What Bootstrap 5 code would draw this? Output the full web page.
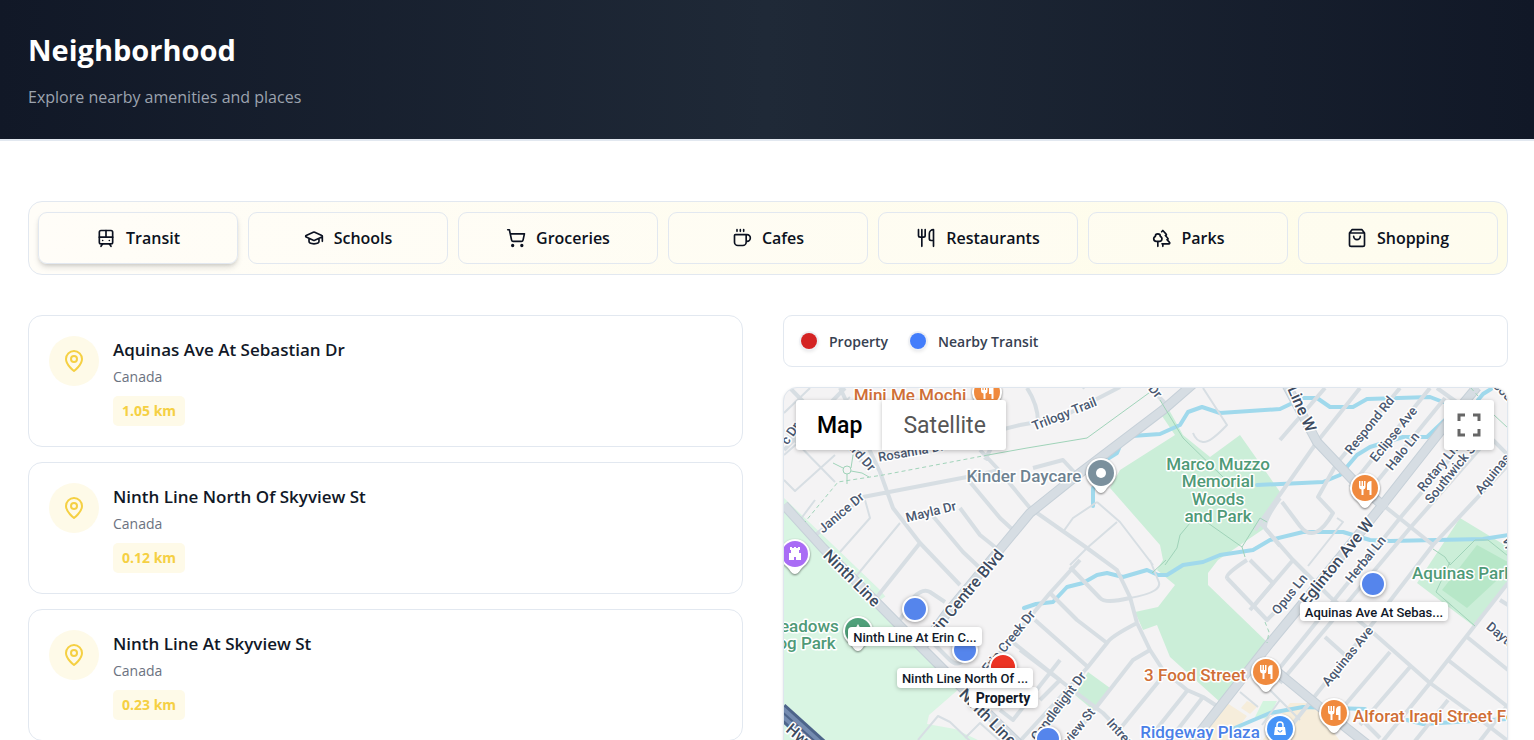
<!DOCTYPE html>
<html lang="en">
<head>
<meta charset="utf-8">
<meta name="viewport" content="width=device-width, initial-scale=1">
<title>Neighborhood</title>
<link href="https://cdn.jsdelivr.net/npm/bootstrap@5.3.0/dist/css/bootstrap.min.css" rel="stylesheet">
<style>
  body { font-family: "Open Sans", "Noto Sans", sans-serif; color: #111827; background: #fff; }
  .page-head { background: linear-gradient(to right, #111827, #1f2937, #111827); border-bottom: 2px solid #e2e8f0; padding: 28px; }
  .page-head h1 { font-size: 29px; line-height: 44px; font-weight: 700; color: #fff; }
  .page-head p { font-size: 16px; line-height: 27px; color: #9ca3af; margin-top: 12px; }
  .page-body { padding: 60px 26px 0 28px; scrollbar-width: none; }
  .page-body::-webkit-scrollbar { display: none; }
  .tabs-box { display: grid; grid-template-columns: repeat(auto-fit, minmax(170px, 1fr)); gap: 10px; padding: 10px 9px; border: 1px solid #e2e8f0; border-radius: 14px; background: linear-gradient(to right, #fffdf8, #fefce8); }
  .tab-btn { height: 52px; border: 1px solid #e2e8f0; border-radius: 9px; background: rgba(255,253,248,.4); color: #0b1120; font-size: 16px; font-weight: 600; gap: 10px; }
  .tab-btn.current { box-shadow: 0 4px 6px -1px rgba(0,0,0,.14), 0 2px 4px -2px rgba(0,0,0,.14); }
  .line-icon { fill: none; stroke: currentColor; stroke-width: 2; stroke-linecap: round; stroke-linejoin: round; flex: none; }
  .columns { display: grid; grid-template-columns: 715fr 725fr; gap: 40px; margin-top: 40px; }
  .place { display: flex; gap: 14px; border: 1px solid #e2e8f0; border-radius: 14px; padding: 20px; }
  .place h2 { font-size: 17px; line-height: 28px; font-weight: 600; }
  .place p { font-size: 14px; line-height: 22px; margin: 2px 0 8px; color: #6b7280; }
  .pin-disc { width: 50px; height: 50px; border-radius: 50%; background: #fefae8; color: #f5d043; flex: none; }
  .distance { display: inline-block; height: 30px; line-height: 30px; padding: 0 9px; border-radius: 5px; background: #fefae8; color: #f5d043; font-size: 14px; font-weight: 700; }
  .legend-box { height: 52px; border: 1px solid #e2e8f0; border-radius: 9px; padding: 0 17px; gap: 22px; font-size: 14px; font-weight: 600; color: #374151; }
  .legend-item { gap: 12px; }
  .dot { width: 16px; height: 16px; border-radius: 50%; box-shadow: 0 0 0 2px #eef0f4, 0 2px 4px rgba(0,0,0,.14); }
  .dot-red { background: #d42424; }
  .dot-blue { background: #437dfb; }
  .map-box { height: 700px; margin-top: 20px; border: 1px solid #dfe6ee; border-radius: 14px; background: #f4f3f4; box-shadow: 0 1px 3px rgba(0,0,0,.1); }
  .map-art { width: 100%; height: 100%; display: block; font-family: Roboto, sans-serif; }
  .map-types { top: 12px; left: 12px; font-family: Roboto, sans-serif; font-size: 23px; }
  .map-types button, .map-full { border: 0; background: #fff; height: 50px; box-shadow: 0 1px 4px rgba(0,0,0,.25); color: #565656; }
  .map-types button { padding: 2px 20px 0 21px; }
  .map-types button:first-child { color: #000; font-weight: 500; border-radius: 3px 0 0 3px; }
  .map-types button:last-child { border-radius: 0 3px 3px 0; }
  .map-full { top: 12px; right: 13px; width: 50px; padding: 0; border-radius: 3px; }
  .road { fill: none; stroke: #d7dee3; stroke-width: 4; stroke-linejoin: round; }
  .thin { stroke-width: 2; }
  .major { fill: none; stroke: #c6d0d8; stroke-width: 10; }
  .major-in { fill: none; stroke: #d6dde3; stroke-width: 8; }
  .water { fill: none; stroke: #a0d9ec; stroke-width: 4; stroke-linejoin: round; stroke-linecap: round; }
  .trail { fill: none; stroke: #a0d3b9; stroke-width: 1; }
  .map-art text { paint-order: stroke; stroke: #fff; stroke-width: 3px; stroke-linejoin: round; text-anchor: middle; }
  .street { font-size: 13px; font-weight: 500; fill: #4a5870; }
  .avenue { font-size: 16px; font-weight: 500; fill: #3d4b5f; }
  .poi { font-size: 17px; font-weight: 500; }
  .map-art .from-left { text-anchor: start; }
  .food { fill: #d06f37; }
  .green { fill: #4f9a77; }
  .grey { fill: #6e8291; }
  .shop { fill: #4a80e8; }
  .map-art .tag { font-size: 13px; font-weight: 500; fill: #101828; stroke: none; }
  .map-art .tag-bold { font-size: 14px; font-weight: 700; }
  .plate { fill: #fff; filter: drop-shadow(0 1px 2px rgba(0,0,0,.25)); }
  .spot { fill: #5585ec; stroke: #fff; stroke-width: 2; filter: drop-shadow(0 1px 2px rgba(0,0,0,.4)); }
  .spot-home { fill: #ec3323; }
  .pin-body { fill: #fff; filter: drop-shadow(0 1px 1px rgba(0,0,0,.5)); }
  .card-stack { gap: 15px; }
</style>
</head>
<body>
<div class="d-flex flex-column vh-100 overflow-hidden">
  <header class="page-head flex-shrink-0">
    <h1 class="m-0">Neighborhood</h1>
    <p class="mb-0">Explore nearby amenities and places</p>
  </header>

  <main class="page-body flex-grow-1 overflow-auto">
    <nav class="tabs-box" aria-label="Categories">
      <button type="button" class="tab-btn current d-flex align-items-center justify-content-center"><svg class="line-icon" width="20" height="20" viewBox="0 0 24 24"><rect width="16" height="16" x="4" y="3" rx="2"/><path d="M4 11h16M12 3v8M8 19l-2 3M18 22l-2-3M8 15h.01M16 15h.01"/></svg>Transit</button>
      <button type="button" class="tab-btn d-flex align-items-center justify-content-center"><svg class="line-icon" width="20" height="20" viewBox="0 0 24 24"><path d="M21.42 10.922a1 1 0 0 0-.019-1.838L12.83 5.18a2 2 0 0 0-1.66 0L2.6 9.08a1 1 0 0 0 0 1.832l8.57 3.908a2 2 0 0 0 1.66 0zM22 10v6M6 12.5V16a6 3 0 0 0 12 0v-3.5"/></svg>Schools</button>
      <button type="button" class="tab-btn d-flex align-items-center justify-content-center"><svg class="line-icon" width="20" height="20" viewBox="0 0 24 24"><circle cx="8" cy="21" r="1"/><circle cx="19" cy="21" r="1"/><path d="M2.05 2.05h2l2.66 12.42a2 2 0 0 0 2 1.58h9.78a2 2 0 0 0 1.95-1.57l1.65-7.43H5.12"/></svg>Groceries</button>
      <button type="button" class="tab-btn d-flex align-items-center justify-content-center"><svg class="line-icon" width="20" height="20" viewBox="0 0 24 24"><path d="M10 2v2M14 2v2M6 2v2M16 8a1 1 0 0 1 1 1v8a4 4 0 0 1-4 4H7a4 4 0 0 1-4-4V9a1 1 0 0 1 1-1h14a4 4 0 1 1 0 8h-1"/></svg>Cafes</button>
      <button type="button" class="tab-btn d-flex align-items-center justify-content-center"><svg class="line-icon" width="20" height="20" viewBox="0 0 24 24"><path d="M3 2v7c0 1.1.9 2 2 2h4a2 2 0 0 0 2-2V2M7 2v20M21 15V2a5 5 0 0 0-5 5v6c0 1.1.9 2 2 2h3Zm0 0v7"/></svg>Restaurants</button>
      <button type="button" class="tab-btn d-flex align-items-center justify-content-center"><svg class="line-icon" width="20" height="20" viewBox="0 0 24 24"><path d="M10 10v.2A3 3 0 0 1 8.9 16H5a3 3 0 0 1-1-5.8V10a3 3 0 0 1 6 0ZM7 16v6M13 19v3M12 19h8.3a1 1 0 0 0 .7-1.7L18 14h.3a1 1 0 0 0 .7-1.7L16 9h.2a1 1 0 0 0 .8-1.7L13 3l-1.4 1.5"/></svg>Parks</button>
      <button type="button" class="tab-btn d-flex align-items-center justify-content-center"><svg class="line-icon" width="20" height="20" viewBox="0 0 24 24"><path d="M6 2 3 6v14a2 2 0 0 0 2 2h14a2 2 0 0 0 2-2V6l-3-4ZM3 6h18M16 10a4 4 0 0 1-8 0"/></svg>Shopping</button>
    </nav>

    <div class="columns">
      <section class="card-stack d-flex flex-column">
        <article class="place">
          <span class="pin-disc d-flex align-items-center justify-content-center"><svg class="line-icon" width="24" height="24" viewBox="0 0 24 24"><path d="M20 10c0 6-8 12-8 12s-8-6-8-12a8 8 0 0 1 16 0Z"/><circle cx="12" cy="10" r="3"/></svg></span>
          <div><h2 class="m-0">Aquinas Ave At Sebastian Dr</h2><p>Canada</p><span class="distance">1.05 km</span></div>
        </article>
        <article class="place">
          <span class="pin-disc d-flex align-items-center justify-content-center"><svg class="line-icon" width="24" height="24" viewBox="0 0 24 24"><path d="M20 10c0 6-8 12-8 12s-8-6-8-12a8 8 0 0 1 16 0Z"/><circle cx="12" cy="10" r="3"/></svg></span>
          <div><h2 class="m-0">Ninth Line North Of Skyview St</h2><p>Canada</p><span class="distance">0.12 km</span></div>
        </article>
        <article class="place">
          <span class="pin-disc d-flex align-items-center justify-content-center"><svg class="line-icon" width="24" height="24" viewBox="0 0 24 24"><path d="M20 10c0 6-8 12-8 12s-8-6-8-12a8 8 0 0 1 16 0Z"/><circle cx="12" cy="10" r="3"/></svg></span>
          <div><h2 class="m-0">Ninth Line At Skyview St</h2><p>Canada</p><span class="distance">0.23 km</span></div>
        </article>
      </section>

      <section>
        <div class="legend-box d-flex align-items-center">
          <span class="legend-item d-flex align-items-center"><span class="dot dot-red"></span>Property</span>
          <span class="legend-item d-flex align-items-center"><span class="dot dot-blue"></span>Nearby Transit</span>
        </div>

        <div class="map-box position-relative overflow-hidden">
          <svg class="map-art" viewBox="784 388 723 698" preserveAspectRatio="xMinYMin slice" role="img" aria-label="Map of the neighborhood">
            <defs>
              <g id="pin"><path class="pin-body" d="M0 20C-4 20-5 15-9 12A15 15 0 1 1 9 12C5 15 4 20 0 20Z"/></g>
              <g id="meal" fill="#fff"><path d="M-6-7h1.500v5h1v-5h1.500v5h1v-5H.5v6q0 2-2 2.500V7h-2V1.500q-2.500-.5-2.500-2.500zM6.500-7V7h-2V2H2V-3q0-4 4.500-4Z"/></g>
            </defs>
            <!-- parks and plots -->
            <path fill="#d9f5e3" d="M784 498 880 590 960 688 929 715 927 724 955 729 980 741 784 741Z"/>
            <path fill="#f4f3f4" d="M895 590 960 655 948 672 880 600Z"/>
            <path fill="#cbeed8" d="M1160 413 1168 408 1183 435 1210 457 1240 435 1280 492 1265 528 1218 560 1208 573 1208 585 1268 643 1220 702 1170 657 1157 625 1143 630 1135 612 1158 607 1175 585 1157 570 1163 560 1160 545 1110 488 1120 470 1175 435ZM1088 672 1110 688 1093 710 1075 695ZM1460 518 1508 547V582L1475 627 1417 583Z"/>
            <path fill="#b7e7c8" d="M1477 545 1508 562V570L1467 608 1442 590Z"/>
            <path fill="#f6eddb" d="M1227 703 1247 716 1228 741H1195ZM1290 703H1312L1340 741H1262Z"/>
            <path fill="#f6eddb" d="M1247 701 1258 706 1250 714 1241 708Z"/>
            <path fill="#d3f5df" d="M1263 701H1277L1268 719 1255 717Z"/>
            <!-- water -->
            <path class="water" d="M1132 436 1160 434 1180 425 1188 412 1202 407 1220 413 1280 409 1303 398 1317 398 1330 407 1353 407 1367 399 1430 397 1443 402M1257 485 1323 482 1340 475 1357 455 1370 447 1403 437 1427 437 1445 420M1478 400 1483 394 1491 389M1508 535 1483 539 1390 541 1370 540 1343 532 1303 532 1270 540 1253 550 1220 555 1203 562 1183 565 1167 575 1158 575 1147 570 1123 577 1107 573 1097 575 1083 583 1067 587 1053 602 1036 604 1024 608M1120 446 1117 453 1109 458M1093 488V506M1230 730 1270 713 1303 707 1365 709M1407 720 1423 724 1508 719"/>
            <!-- streets -->
            <path class="road thin" d="M784 480 795 491 835 455M784 430 835 482M865 500 870 518 840 552M900 523 853 580M784 455 850 397M810 388 784 413M800 520 815 500M1097 502 1120 522 1153 565M1097 502 1073 518 1063 532M1117 522 1087 548 1070 565M1203 388 1227 425Q1210 443 1203 442T1193 433M1337 518 1343 522 1308 566M1130 598Q1165 592 1158 580L1150 560M918 740 938 716 950 722 970 741M965 738 980 723 1000 741M1240 692 1258 707M1270 690 1300 720M1280 700 1262 725"/>
            <path class="road" d="M813 537 863 497 967 477 1000 470M790 388 870 470M845 388 784 450M840 388 880 472 893 508 920 543 960 585M920 543 877 597M932 515 963 552 980 568M960 508 980 535 1000 551M970 482 1000 518 1013 530M980 450 997 468 1030 508 1087 548 1117 570 1130 597 1137 623 1150 650 1163 670 1187 690 1203 697 1220 708M1020 425 1060 418 1120 387M1027 388Q1038 405 1038 422M985 460 1000 430 1020 425M1033 468 1063 460 1075 473M1085 388 1075 380M1150 388 1167 405M1080 560 1050 593 1000 653M1070 567 1100 598Q1105 604 1130 598M1050 593 1077 620 1107 643M1137 623Q1110 637 1107 643L1087 668 1020 741M1035 620 1089 668M1150 650 1133 660 1070 741M1020 650 1103 713 1130 741M1163 676 1115 735M1187 691 1155 731M1203 697 1175 733M1227 578Q1225 574 1247 560M1227 578 1267 620 1282 605M1250 560 1273 583 1253 607M1280 498Q1264 520 1265 528L1280 546M900 620 914 597Q923 588 930 592L945 602M930 640 950 660Q958 668 965 658M1010 640 1060 680 1040 700M1000 710 1013 720 1060 660"/>
            <path class="road" d="M1360 388 1317 442 1255 530M1325 388 1280 440M1400 388 1337 463 1318 497 1333 513Q1315 545 1300 526L1282 502M1430 388 1350 487M1445 398 1370 490M1437 388 1458 403M1470 435 1400 518 1270 680M1490 437 1410 528 1280 683M1508 465 1433 545 1373 623 1288 730M1383 505 1433 545M1258 520 1293 560 1270 587 1250 610M1293 560 1330 597 1370 630 1430 683 1477 717 1508 741M1508 583 1430 683 1383 741M1467 637 1508 670M1448 660 1508 707M1390 652 1345 705M1410 667 1360 725M1448 700 1415 741M1508 705 1480 741M1500 600 1508 605M1493 440 1508 455M1450 400 1478 425M1325 637 1345 655M1357 715 1380 738"/>
            <path class="major" d="M1193 384 1163 410 1080 473 1030 513 947 613 920 650M784 505 823 548 897 623 947 673 1020 745M1477 387 1443 428 1380 508 1303 603 1270 643 1190 745M1286 384 1317 442 1353 480 1386 508M1275 670 1320 707 1368 745"/>
            <path class="major-in" d="M1193 384 1163 410 1080 473 1030 513 947 613 920 650M784 505 823 548 897 623 947 673 1020 745M1477 387 1443 428 1380 508 1303 603 1270 643 1190 745M1286 384 1317 442 1353 480 1386 508M1275 670 1320 707 1368 745"/>
            <path d="M780 710 820 746" stroke="#4d648a" stroke-width="16"/><path d="M780 710 820 746" stroke="#748bb0" stroke-width="10"/><path d="M780 710 820 746" stroke="#4d648a" stroke-width="2"/>
            <!-- trails -->
            <path class="trail" d="M988 455 1027 448 1087 438 1153 390M1160 400 1183 438 1223 477M1165 565 1177 548 1180 535 1190 523M1205 521 1242 547 1245 557M1242 547 1260 518 1267 522M1152 573 1166 560M1433 549 1445 557 1450 565 1475 540 1488 540 1508 556M1450 562 1436 592 1475 626M1494 415 1508 428M833 463 843 468M851 468 853 455M847 474V484M851 471 862 473 869 477"/>
            <circle class="trail" cx="847" cy="470" r="4"/>
            <path class="trail" stroke-dasharray="4 3" d="M988 455 883 475 838 482 805 522M1265 622 1269 632 1267 643M1471 388 1478 396"/>
            <!-- street names -->
            <text class="street" transform="translate(1066 418) rotate(-22)">Trilogy Trail</text>
            <text class="street" transform="translate(794 436) rotate(-55)">c Dr</text>
            <text class="street" transform="translate(858 459) rotate(48)">ard Dr</text>
            <text class="street" transform="translate(912 456) rotate(-10)">Rosanna Dr</text>
            <text class="street" transform="translate(844 516) rotate(-40)">Janice Dr</text>
            <text class="street" transform="translate(932 516) rotate(-14)">Mayla Dr</text>
            <text class="street" transform="translate(1152 394) rotate(50)">Dr</text>
            <text class="street" transform="translate(1373 428) rotate(-51)">Respond Rd</text>
            <text class="street" transform="translate(1397 437) rotate(-51)">Eclipse Ave</text>
            <text class="street" transform="translate(1406 454) rotate(-51)">Halo Ln</text>
            <text class="street" transform="translate(1441 471) rotate(-51)">Rotary Ln</text>
            <text class="street" transform="translate(1455 475) rotate(-51)">Southwick St</text>
            <text class="street" transform="translate(1504 467) rotate(-51)">Aquinas Ave</text>
            <text class="street" transform="translate(1504 398) rotate(45)">South</text>
            <text class="street" transform="translate(1293 597) rotate(-51)">Opus Ln</text>
            <text class="street" transform="translate(1369 562) rotate(-51)">Herbal Ln</text>
            <text class="street" transform="translate(1351 659) rotate(-51)">Aquinas Ave</text>
            <text class="street" transform="translate(1501 641) rotate(40)">Dayton</text>
            <text class="street" transform="translate(1504 544) rotate(72)">Vi</text>
            <text class="street" transform="translate(1012 644) rotate(-51)">Erin Creek Dr</text>
            <text class="street" transform="translate(1062 709) rotate(-53)">Candlelight Dr</text>
            <text class="street" transform="translate(1076 737) rotate(-51)">Skyview St</text>
            <text class="street" transform="translate(1121 740) rotate(48)">Intrepid</text>
            <text class="avenue" transform="translate(848 582) rotate(45)">Ninth Line</text>
            <text class="avenue" transform="translate(984 721) rotate(45)">Ninth Line</text>
            <text class="avenue" transform="translate(968 599) rotate(-50)">Erin Centre Blvd</text>
            <text class="avenue" transform="translate(1341 565) rotate(-51)">Eglinton Ave W</text>
            <text class="avenue" transform="translate(1297 411) rotate(66)">Line W</text>
            <text class="avenue" transform="translate(797 741) rotate(40)">Hwy</text>
            <!-- place names -->
            <text class="poi food" x="910" y="401">Mini Me Mochi</text>
            <text class="poi grey" x="1024" y="482">Kinder Daycare</text>
            <text class="poi green" x="1218" y="470">Marco Muzzo</text>
            <text class="poi green" x="1218" y="487">Memorial</text>
            <text class="poi green" x="1218" y="505">Woods</text>
            <text class="poi green" x="1218" y="522">and Park</text>
            <text class="poi green from-left" x="1412" y="579">Aquinas Park</text>
            <text class="poi green" x="802" y="632">Meadows</text>
            <text class="poi green" x="801" y="649">Dog Park</text>
            <text class="poi food" x="1195" y="681">3 Food Street</text>
            <text class="poi food from-left" x="1353" y="722">Alforat Iraqi Street Food</text>
            <text class="poi shop" x="1200" y="738">Ridgeway Plaza</text>
            <!-- pins -->
            <g transform="translate(987 392)"><use href="#pin"/><circle r="13" fill="#f08a3e"/><use href="#meal"/></g>
            <g transform="translate(1365 488)"><use href="#pin"/><circle r="13" fill="#f08a3e"/><use href="#meal"/></g>
            <g transform="translate(1266 672)"><use href="#pin"/><circle r="13" fill="#f08a3e"/><use href="#meal"/></g>
            <g transform="translate(1334 713)"><use href="#pin"/><circle r="13" fill="#f08a3e"/><use href="#meal"/></g>
            <g transform="translate(1101 473)"><use href="#pin"/><circle r="13" fill="#7b909d"/><circle r="5" fill="#fff"/></g>
            <g transform="translate(1280 729)"><use href="#pin"/><circle r="13" fill="#4593f7"/><path fill="#fff" d="M-5-2H5L6 6H-6Z"/><path d="M-3-2V-4a3 3 0 0 1 6 0v2" fill="none" stroke="#fff" stroke-width="1.500"/><path d="M-2 1a2 2 0 0 0 4 0" fill="none" stroke="#4593f7"/></g>
            <g transform="translate(795 554)"><use href="#pin"/><circle r="13" fill="#a96cf5"/><path fill="#fff" d="M-6 6V-1H-4V-4H-5V-7H-3V-6H-1V-7H1V-6H3V-7H5V-4H4V-1H6V6H1V3H-1V6Z"/></g>
            <g transform="translate(858 631)"><use href="#pin"/><circle r="13" fill="#4fa07a"/><path fill="#fff" d="M0-7 4 0H-4ZM0-3 5 4H-5ZM-1 4H1V8H-1Z"/></g>
            <!-- stops -->
            <circle class="spot" cx="915" cy="609" r="12"/>
            <circle class="spot" cx="965" cy="650" r="12"/>
            <circle class="spot" cx="1373" cy="584" r="12"/>
            <circle class="spot" cx="1048" cy="739" r="12"/>
            <circle class="spot spot-home" cx="1003" cy="667" r="13"/>
            <rect class="plate" x="848" y="627" width="134" height="19" rx="4"/><text class="tag" x="915" y="642">Ninth Line At Erin C...</text>
            <rect class="plate" x="969" y="687" width="69" height="21" rx="4"/><text class="tag tag-bold" x="1003" y="703">Property</text>
            <rect class="plate" x="897" y="668" width="136" height="20" rx="4"/><text class="tag" x="965" y="683">Ninth Line North Of ...</text>
            <rect class="plate" x="1300" y="602" width="148" height="19" rx="4"/><text class="tag" x="1374" y="617">Aquinas Ave At Sebas...</text>
          </svg>
          <div class="map-types position-absolute d-flex">
            <button type="button">Map</button><button type="button">Satellite</button>
          </div>
          <button type="button" class="map-full position-absolute d-flex align-items-center justify-content-center" aria-label="Toggle fullscreen view"><svg width="24" height="24" viewBox="0 0 24 24" fill="none" stroke="#666" stroke-width="3"><path d="M2 8V2H8M16 2H22V8M22 16V22H16M8 22H2V16"/></svg></button>
        </div>
      </section>
    </div>
  </main>
</div>
<script src="https://cdn.jsdelivr.net/npm/bootstrap@5.3.0/dist/js/bootstrap.bundle.min.js"></script>
</body>
</html>
